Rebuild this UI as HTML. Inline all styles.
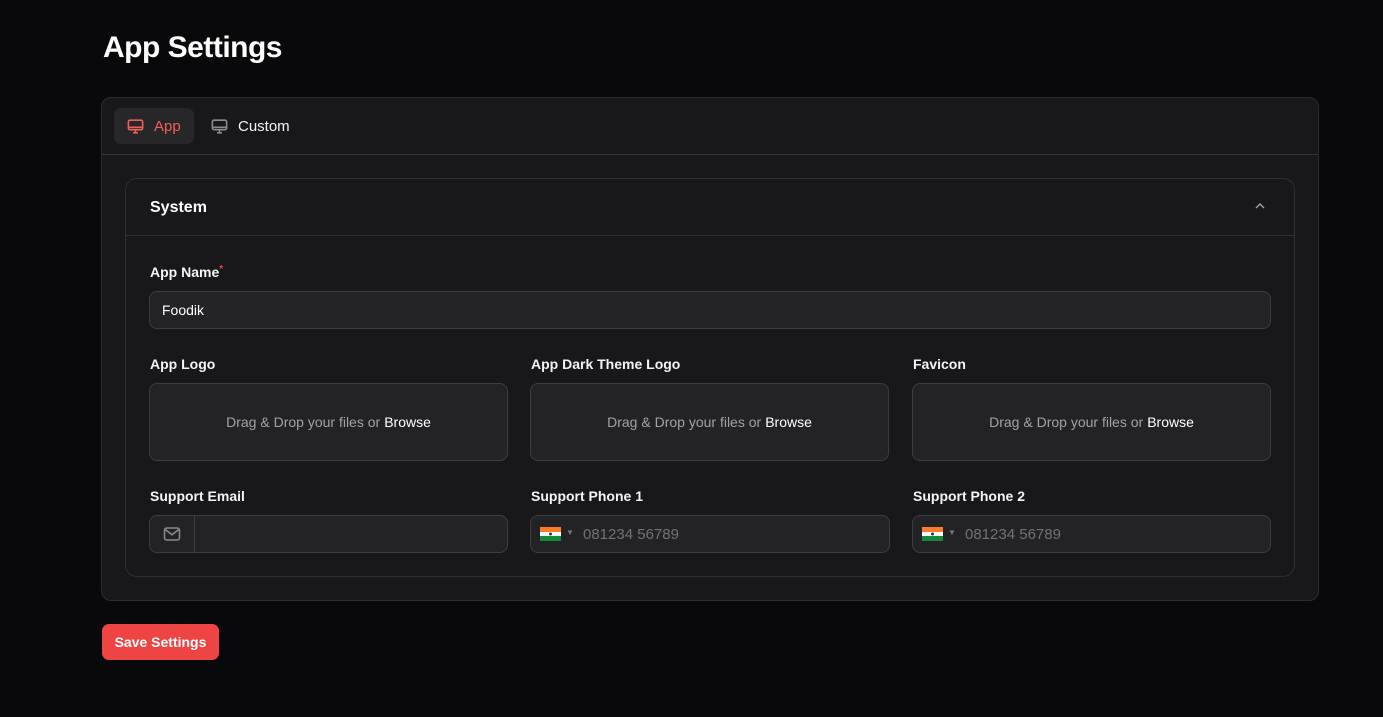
<!DOCTYPE html>
<html><head><style>
*{box-sizing:border-box;margin:0;padding:0}
body{width:1383px;height:717px;background:#09090b;font-family:"Liberation Sans",sans-serif;color:#fff;position:relative;overflow:hidden}
h1{position:absolute;left:103px;top:31px;font-size:30px;font-weight:bold;letter-spacing:-0.5px}
.card{position:absolute;left:101px;top:97px;width:1218px;height:504px;background:#18181b;border:1px solid #2c2c30;border-radius:10px}
.tabs{height:57px;border-bottom:1px solid #333338;position:relative}
.tab{position:absolute;top:10px;height:36px;border-radius:7px;display:flex;align-items:center;padding:0 12px;font-size:15px;gap:9px}
.tab svg{flex-shrink:0;width:19px;height:19px}
.inner{position:absolute;left:23px;top:80px;width:1170px;height:399px;border:1px solid #2f2f33;border-radius:12px}
.ihead{height:57px;border-bottom:1px solid #2f2f33;padding:20px 24px;font-size:16px;font-weight:bold}
.lbl{position:absolute;font-size:14px;font-weight:bold;color:#f4f4f5}
.box{position:absolute;background:#232326;border:1px solid #3c3c41;border-radius:8px}
.drop{display:flex;align-items:center;justify-content:center;font-size:14px;color:#a1a1aa}
.drop b{color:#fff;font-weight:normal;margin-left:4px}
.ph{position:absolute;left:52px;top:10px;font-size:15px;color:#71717a}
.flag{position:absolute;left:9px;top:11px;width:21px;height:14px}
</style></head><body>
<h1>App Settings</h1>
<div class="card">
 <div class="tabs">
  <div class="tab" style="left:12px;background:#27272a;color:#f0605a;width:80px">
   <svg viewBox="0 0 24 24" fill="none" stroke="#f0605a" stroke-width="2"><rect x="3" y="4" width="18" height="12" rx="2"/><path d="M3 13h18M9 20h6M12 16v4"/></svg>App</div>
  <div class="tab" style="left:96px;color:#f4f4f5">
   <svg viewBox="0 0 24 24" fill="none" stroke="#8a8a92" stroke-width="2"><rect x="3" y="4" width="18" height="12" rx="2"/><path d="M3 13h18M9 20h6M12 16v4"/></svg>Custom</div>
 </div>
 <div class="inner">
  <div class="ihead">System<svg style="position:absolute;right:26px;top:19px" width="16" height="16" viewBox="0 0 24 24" fill="none" stroke="#a1a1aa" stroke-width="2"><path d="M6 15l6-6 6 6"/></svg></div>
  <div class="lbl" style="left:24px;top:85px">App Name<span style="color:#ef4444;font-size:10px;vertical-align:top">*</span></div>
  <div class="box" style="left:23px;top:112px;width:1122px;height:38px;font-size:14px;padding:10px 12px">Foodik</div>
  <div class="lbl" style="left:24px;top:177px">App Logo</div>
  <div class="lbl" style="left:405px;top:177px">App Dark Theme Logo</div>
  <div class="lbl" style="left:787px;top:177px">Favicon</div>
  <div class="box drop" style="left:23px;top:204px;width:359px;height:78px">Drag &amp; Drop your files or<b>Browse</b></div>
  <div class="box drop" style="left:404px;top:204px;width:359px;height:78px">Drag &amp; Drop your files or<b>Browse</b></div>
  <div class="box drop" style="left:786px;top:204px;width:359px;height:78px">Drag &amp; Drop your files or<b>Browse</b></div>
  <div class="lbl" style="left:24px;top:309px">Support Email</div>
  <div class="lbl" style="left:405px;top:309px">Support Phone 1</div>
  <div class="lbl" style="left:787px;top:309px">Support Phone 2</div>
  <div class="box" style="left:23px;top:336px;width:359px;height:38px">
   <div style="position:absolute;left:0;top:0;width:45px;height:36px;border-right:1px solid #3c3c41;display:flex;align-items:center;justify-content:center">
   <svg width="18" height="16" viewBox="0 0 24 20" fill="none" stroke="#8a8a92" stroke-width="2"><rect x="2" y="2" width="20" height="16" rx="3"/><path d="M3 4l9 7 9-7"/></svg></div></div>
  <div class="box" style="left:404px;top:336px;width:360px;height:38px">
   <svg class="flag" viewBox="0 0 21 14"><rect width="21" height="5" fill="#ff7a2a"/><rect y="5" width="21" height="4" fill="#fff"/><rect y="9" width="21" height="5" fill="#138a3a"/><circle cx="10.5" cy="7" r="1.5" fill="#334"/></svg>
   <span style="position:absolute;left:35px;top:12px;font-size:8px;color:#777">▼</span><span class="ph">081234 56789</span></div>
  <div class="box" style="left:786px;top:336px;width:359px;height:38px">
   <svg class="flag" viewBox="0 0 21 14"><rect width="21" height="5" fill="#ff7a2a"/><rect y="5" width="21" height="4" fill="#fff"/><rect y="9" width="21" height="5" fill="#138a3a"/><circle cx="10.5" cy="7" r="1.5" fill="#334"/></svg>
   <span style="position:absolute;left:35px;top:12px;font-size:8px;color:#777">▼</span><span class="ph">081234 56789</span></div>
 </div>
</div>
<div style="position:absolute;left:102px;top:624px;width:117px;height:36px;background:#ef4444;border-radius:7px;font-size:14px;font-weight:bold;display:flex;align-items:center;justify-content:center">Save Settings</div>
</body></html>
